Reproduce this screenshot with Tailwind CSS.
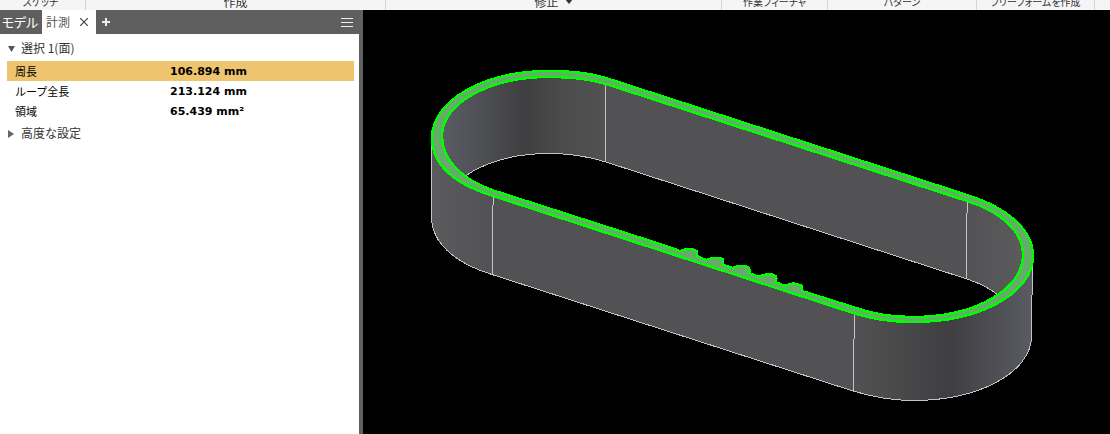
<!DOCTYPE html>
<html lang="ja">
<head>
<meta charset="utf-8">
<meta name="viewport" content="width=device-width, initial-scale=1">
<title>計測</title>
<script src="https://cdn.jsdelivr.net/npm/@tailwindcss/browser@4"></script>
</head>
<body class="flex h-screen flex-col overflow-hidden bg-black font-['Noto_Sans_CJK_JP',sans-serif] text-xs text-[#333]">
  <!-- Ribbon group captions, scrolled almost out of view -->
  <header class="flex h-2.5 shrink-0 items-end overflow-hidden bg-[#f5f5f5] text-[10px] leading-4 whitespace-nowrap [font-feature-settings:'palt']">
    <div class="flex h-full w-[86px] shrink-0 items-end justify-center border-r border-[#d5d5d5] pr-1">スケッチ</div>
    <div class="flex h-full w-[300px] shrink-0 items-end justify-center border-r border-[#d5d5d5] text-xs leading-4">作成</div>
    <div class="flex h-full w-[336px] shrink-0 items-end justify-center border-r border-[#d5d5d5]">
      <button type="button" class="flex items-end gap-1.5 text-xs leading-4">修正
        <svg class="mb-1.5 h-1.5 w-2" viewBox="0 0 8 6" fill="#333" aria-hidden="true"><path d="M0 1h8L4 6z"/></svg>
      </button>
    </div>
    <div class="flex h-full w-[106px] shrink-0 items-end justify-center border-r border-[#d5d5d5]">作業フィーチャ</div>
    <div class="flex h-full w-[149px] shrink-0 items-end justify-center border-r border-[#d5d5d5]">パターン</div>
    <div class="flex h-full w-[118px] shrink-0 items-end justify-center border-r border-[#d5d5d5]">フリーフォームを作成</div>
  </header>

  <div class="flex min-h-0 flex-1">
    <aside class="w-[363px] shrink-0 border-r-4 border-[#606060] bg-white">
      <nav class="flex h-6 items-stretch bg-[#5f5f5f] text-[13px] leading-6">
        <button type="button" class="w-[42px] pr-0.5 text-center whitespace-nowrap text-white [font-feature-settings:'palt']">モデル</button>
        <div class="flex w-[54px] items-center justify-between bg-white pr-2 pl-1">
          <button type="button" class="text-xs leading-6 text-[#555]">計測</button>
          <button type="button" aria-label="閉じる">
            <svg class="size-2" viewBox="0 0 8 8" fill="none" stroke="#444" stroke-width="1.2"><path d="M0 0l8 8M8 0L0 8"/></svg>
          </button>
        </div>
        <button type="button" class="ml-1.5" aria-label="追加">
          <svg class="size-2" viewBox="0 0 8 8" fill="none" stroke="#eee" stroke-width="2"><path d="M0 4h8M4 0v8"/></svg>
        </button>
        <button type="button" class="mr-1.5 ml-auto" aria-label="メニュー">
          <svg class="h-[9px] w-3" viewBox="0 0 12 9" fill="#eee"><path d="M0 0h12v1H0zM0 4h12v1H0zM0 8h12v1H0z"/></svg>
        </button>
      </nav>

      <button type="button" aria-expanded="true" class="mt-1 flex h-5 items-center gap-1.5 pl-2 text-xs leading-5">
        <svg class="mt-0.5 h-1.5 w-[7px]" viewBox="0 0 7 6" fill="#555" aria-hidden="true"><path d="M0 0h7L3.500 6z"/></svg>選択 1(面)
      </button>
      <table class="mt-[3px] ml-[7px] w-[347px] table-fixed border-collapse text-left text-[11px] text-black">
        <tbody>
          <tr class="h-5 bg-[#eec46f]"><th scope="row" class="w-[163px] py-0 pl-2 leading-5 font-normal">周長</th><td class="px-0 pt-px pb-0 font-['DejaVu_Sans',sans-serif] leading-[19px] font-bold">106.894 mm</td></tr>
          <tr class="h-5"><th scope="row" class="py-0 pl-2 leading-5 font-normal">ループ全長</th><td class="px-0 pt-px pb-0 font-['DejaVu_Sans',sans-serif] leading-[19px] font-bold">213.124 mm</td></tr>
          <tr class="h-5"><th scope="row" class="py-0 pl-2 leading-5 font-normal">領域</th><td class="px-0 pt-px pb-0 font-['DejaVu_Sans',sans-serif] leading-[19px] font-bold">65.439 mm²</td></tr>
        </tbody>
      </table>
      <button type="button" aria-expanded="false" class="mt-0.5 flex h-5 items-center gap-[7px] pl-2 text-xs leading-5">
        <svg class="mt-px h-2 w-1.5" viewBox="0 0 6 8" fill="#666" aria-hidden="true"><path d="M0 0v8l6-4z"/></svg>高度な設定
      </button>
    </aside>

    <!-- 3D view -->
    <main class="min-w-0 flex-1 bg-black">
      <svg class="block h-full w-full" viewBox="363 10 747 424" preserveAspectRatio="xMinYMin meet" role="img" aria-label="3D モデル" shape-rendering="crispEdges" fill="none">
        <defs>
          <linearGradient id="outer" gradientUnits="userSpaceOnUse" x1="431" y1="0" x2="1033" y2="0">
            <stop offset="0" stop-color="#5b5b5d"/><stop offset=".1" stop-color="#525254"/><stop offset=".7" stop-color="#525254"/><stop offset=".77" stop-color="#4a4a4b"/><stop offset=".86" stop-color="#3f3f42"/><stop offset="1" stop-color="#5a5b63"/>
          </linearGradient>
          <linearGradient id="inner" gradientUnits="userSpaceOnUse" x1="442" y1="0" x2="1023" y2="0">
            <stop offset="0" stop-color="#5a5b63"/><stop offset=".05" stop-color="#525358"/><stop offset=".14" stop-color="#3f3f41"/><stop offset=".21" stop-color="#4b4b4c"/><stop offset=".28" stop-color="#525254"/><stop offset=".9" stop-color="#525254"/><stop offset="1" stop-color="#5b5b5e"/>
          </linearGradient>
          <clipPath id="opening"><path d="M606 84L967 201C1002 212 1023 232 1023 255C1023 290 974 317 913 317C892 317 872 314 853 307L495 191C462 180 442 160 442 136C442 103 490 77 549 77C570 77 590 79 606 84z"/></clipPath>
        </defs>
        <path fill="url(#outer)" stroke="#c4c4c4" d="M431.500 138V217C431.500 242 454 263 492 274.500L853 391C873 397 893 400.500 913 400.500C980 400.500 1031.500 372 1031.500 336L1032.500 256L913 200L493 150z"/>
        <path stroke="#c4c4c4" d="M493.500 196v9M492.500 205v69M854.500 313v26M853.500 339v52"/>
        <g clip-path="url(#opening)">
          <path fill="url(#inner)" d="M431 60h610v270H431z"/>
          <path fill="#000" stroke="#c4c4c4" d="M606 162L967 279C979 283 990 288 999 296L1023 330L900 360L430 230L442 214C442 180 490 153.500 549 153.500C570 153.500 590 157 606 162z"/>
          <path stroke="#c4c4c4" d="M605.500 80v82M967.500 196v17M966.500 213v66"/>
        </g>
        <path fill="#68aa6b" fill-rule="evenodd" stroke="#00ff00" stroke-width="2.400" stroke-linejoin="round" d="M606 78L967 195C1008 208 1033 230 1033 256C1033 293 980 322 913 322C892 322 871 319 853 313L493 196C455 184 432 165 432 138C432 100 485 71 549 71C569 71 590 73 606 78zM606 84L967 201C1002 212 1023 232 1023 255C1023 290 974 317 913 317C892 317 872 314 853 307L802 291V286Q793 281 785 286L775 282Q777 280 776 276Q768 272 759 277L749 273Q751 271 748 267Q740 264 733 268L723 265V259Q716 256 706 260L697 256V251Q690 247 680 251L660 244L495 191C462 180 442 160 442 136C442 103 490 77 549 77C570 77 590 79 606 84z"/>
      </svg>
    </main>
  </div>
</body>
</html>
